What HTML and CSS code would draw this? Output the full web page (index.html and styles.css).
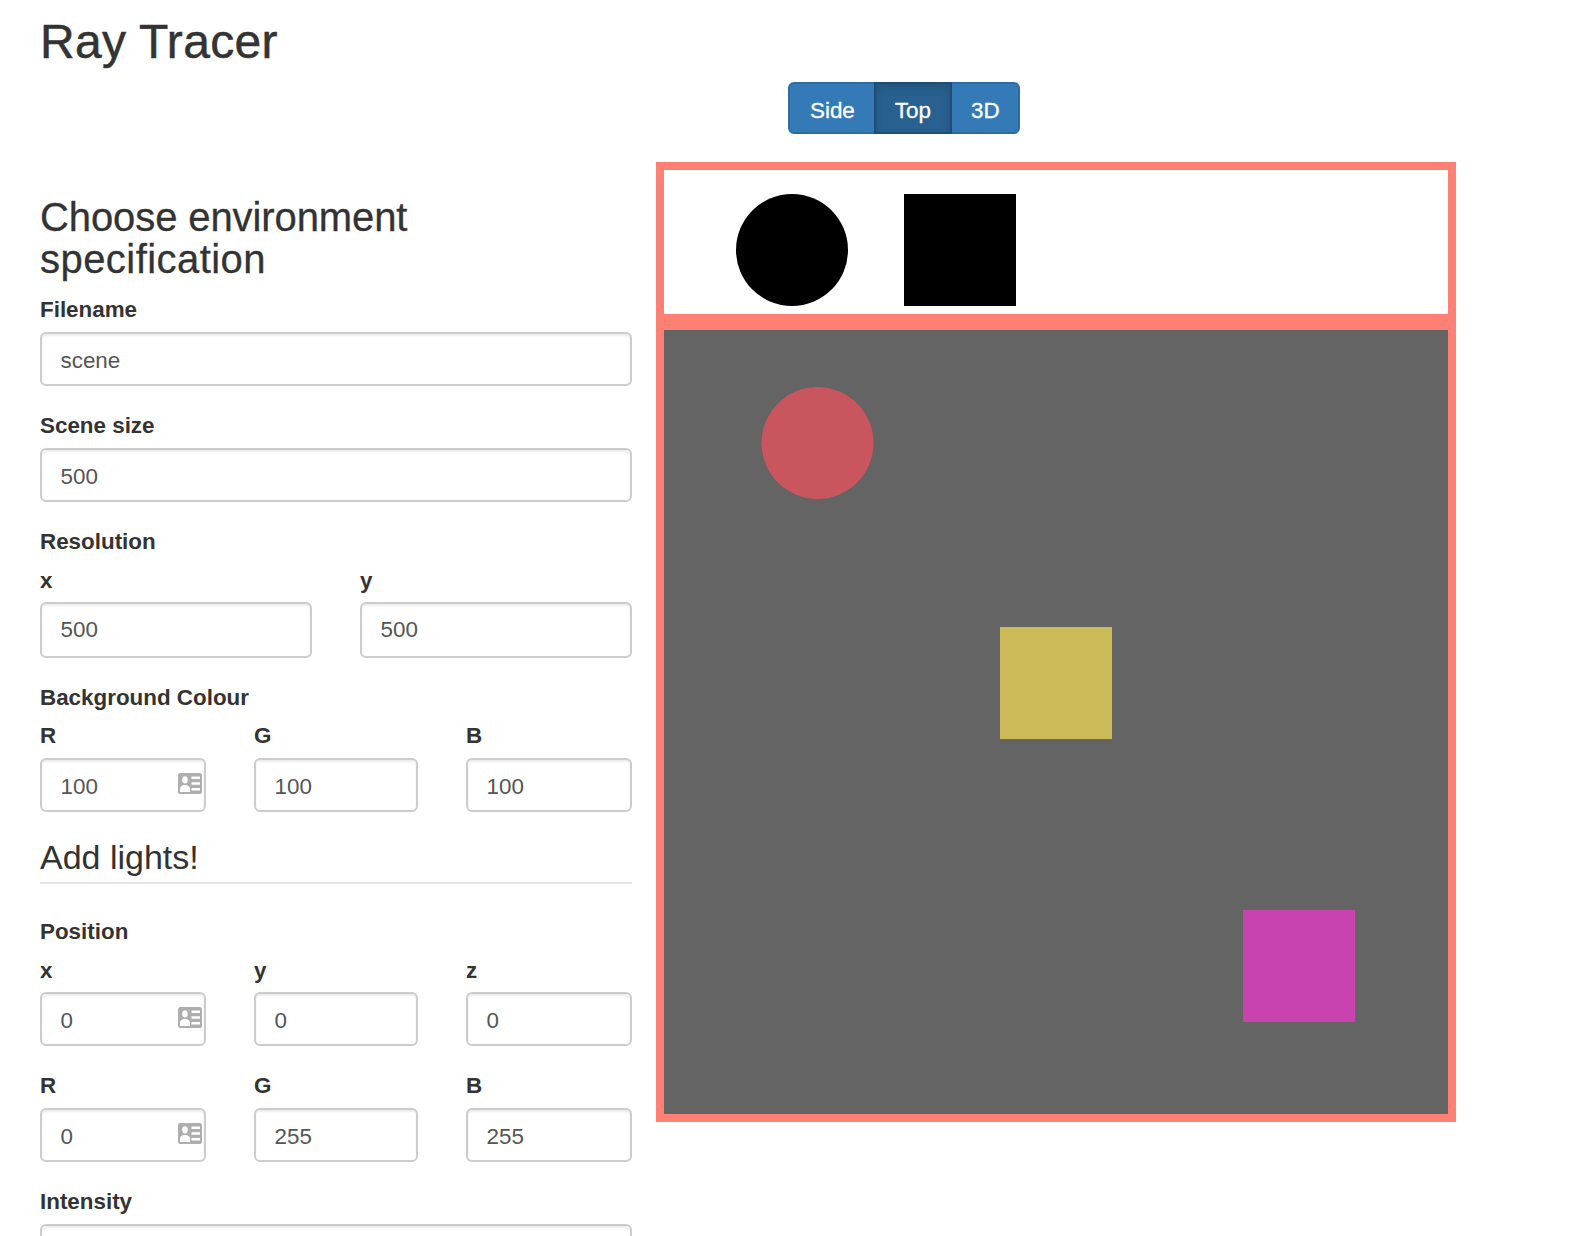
FILE: index.html
```html
<!DOCTYPE html>
<html>
<head>
<title>Ray Tracer</title>
<link rel="stylesheet" href="styles.css">
</head>
<body>
  <h1 class="title">Ray Tracer</h1>
  <div class="toolbar">
    <div class="btn-group">
      <button class="btn">Side</button>
      <button class="btn active">Top</button>
      <button class="btn">3D</button>
    </div>
  </div>

  <div class="main">
    <form class="spec">
      <h2>Choose environment <span class="wide">specification</span></h2>

      <div class="group">
        <label>Filename</label>
        <input class="field" type="text" value="scene">
      </div>
      <div class="group">
        <label>Scene size</label>
        <input class="field" type="text" value="500">
      </div>

      <div class="group">
        <label class="head">Resolution</label>
        <div class="cols two snug">
          <div>
            <label>x</label>
            <input class="field tall" type="text" value="500">
          </div>
          <div>
            <label>y</label>
            <input class="field tall" type="text" value="500">
          </div>
        </div>
      </div>

      <div class="group">
        <label class="head near">Background Colour</label>
        <div class="cols three">
          <div>
            <label>R</label>
            <div class="with-icon">
              <input class="field" type="text" value="100">
              <svg class="card-icon" viewBox="0 0 24 21"><use href="#contact"/></svg>
            </div>
          </div>
          <div>
            <label>G</label>
            <input class="field" type="text" value="100">
          </div>
          <div>
            <label>B</label>
            <input class="field" type="text" value="100">
          </div>
        </div>
      </div>

      <h3>Add lights!</h3>

      <div class="group">
        <label class="head">Position</label>
        <div class="cols three snug">
          <div>
            <label>x</label>
            <div class="with-icon">
              <input class="field" type="text" value="0">
              <svg class="card-icon" viewBox="0 0 24 21"><use href="#contact"/></svg>
            </div>
          </div>
          <div>
            <label>y</label>
            <input class="field" type="text" value="0">
          </div>
          <div>
            <label>z</label>
            <input class="field" type="text" value="0">
          </div>
        </div>
      </div>

      <div class="group">
        <div class="cols three">
          <div>
            <label>R</label>
            <div class="with-icon">
              <input class="field" type="text" value="0">
              <svg class="card-icon" viewBox="0 0 24 21"><use href="#contact"/></svg>
            </div>
          </div>
          <div>
            <label>G</label>
            <input class="field" type="text" value="255">
          </div>
          <div>
            <label>B</label>
            <input class="field" type="text" value="255">
          </div>
        </div>
      </div>

      <div class="group">
        <label>Intensity</label>
        <input class="field" type="text">
      </div>
    </form>

    <div class="views">
      <!-- side view -->
      <svg class="view" width="800" height="160" viewBox="0 0 784 144">
        <rect width="784" height="144" fill="#fff"/>
        <circle cx="128" cy="80" r="56" fill="#000"/>
        <rect x="240" y="24" width="112" height="112" fill="#000"/>
      </svg>
      <!-- top view -->
      <svg class="view" width="800" height="800" viewBox="0 0 784 784">
        <rect width="784" height="784" fill="#646464"/>
        <circle cx="153.500" cy="113" r="56" fill="#c9565e"/>
        <rect x="336" y="297" width="112" height="112" fill="#cbbb58"/>
        <rect x="579" y="580" width="112" height="112" fill="#c843b0"/>
      </svg>
    </div>
  </div>

  <svg class="defs" width="0" height="0">
    <symbol id="contact" viewBox="0 0 24 21">
      <rect width="24" height="21" rx="2.5" fill="#aeaeae"/>
      <ellipse cx="7" cy="6.800" rx="2.800" ry="3.600" fill="#fff"/>
      <path d="M2 19v-3.500c0-2 2.400-3.500 5-3.500s5 1.500 5 3.500V19z" fill="#fff"/>
      <path d="M13.500 3.500H22v2.400h-8.500zM13.500 9.300H22v2.400h-8.500zM13.500 15.100H22v2.400h-8.500z" fill="#fff"/>
    </symbol>
  </svg>
</body>
</html>
```

FILE: styles.css
```css
html, body {
  height: 100%;
  overflow: hidden;
}
body {
  margin: 0;
  font-family: "Liberation Sans", Arial, sans-serif;
  font-size: 22.4px;
  line-height: 32px;
  color: #333;
  background: #fff;
}

.title {
  margin: 0;
  padding: 15px 0 0 40px;
  height: 68px;
  font-size: 48px;
  line-height: 54px;
  font-weight: 500;
  letter-spacing: .3px;
  -webkit-text-stroke: .5px #333;
  box-sizing: border-box;
}

/* view switcher */
.toolbar { padding: 14px 0 0 788px; }
.btn-group { display: inline-flex; height: 52px; vertical-align: top; }
.btn {
  margin: 0 0 0 -2px;
  padding: 5px 19px 0;
  font: inherit;
  color: #fff;
  background: #337ab7;
  border: 2px solid #2e6da4;
  -webkit-text-stroke: .3px #fff;
}
.btn:first-child { margin-left: 0; padding-left: 20px; border-radius: 6px 0 0 6px; }
.btn:last-child { padding-right: 18px; border-radius: 0 6px 6px 0; }
.btn.active {
  position: relative;
  background: #286090;
  border-color: #204d74;
  box-shadow: inset 0 4px 8px rgba(0, 0, 0, .125);
}

.main {
  display: flex;
  gap: 24px;
  padding: 28px 0 0 40px;
}
.spec { width: 592px; flex: none; }
.views { width: 800px; flex: none; }
.view {
  display: block;
  box-sizing: border-box;
  border: 8px solid #fc8074;
}

h2 {
  margin: 34px 0 14px;
  font-size: 40px;
  line-height: 42px;
  font-weight: 500;
  letter-spacing: -.1px;
  font-variant-ligatures: none;
  -webkit-text-stroke: .3px #333;
}
.wide { letter-spacing: .45px; }
h3 {
  margin: 26px 0 32px;
  padding-bottom: 6px;
  font-size: 34px;
  line-height: 38px;
  font-weight: 400;
  border-bottom: 2px solid #e6e6e6;
}

label {
  display: block;
  margin-bottom: 6px;
  font-weight: 700;
}
.group { margin-bottom: 24px; }
.head { margin-bottom: 7px; }
.head.near { margin-bottom: 6px; }
.snug label { margin-bottom: 5px; }
.cols { display: grid; column-gap: 48px; }
.two { grid-template-columns: 1fr 1fr; }
.three { grid-template-columns: 166px 164px 166px; }

.field {
  display: block;
  box-sizing: border-box;
  width: 100%;
  height: 54px;
  padding: 3px 18.500px 0;
  font: inherit;
  color: #555;
  background: #fff;
  border: 2px solid #ccc;
  border-radius: 6px;
  box-shadow: inset 0 2px 2px rgba(0, 0, 0, .075);
}
.tall { height: 56px; padding-top: 0; }

.with-icon { position: relative; }
.card-icon {
  position: absolute;
  top: 15px;
  right: 4px;
  width: 24px;
  height: 21px;
}
.defs { position: absolute; }
```
